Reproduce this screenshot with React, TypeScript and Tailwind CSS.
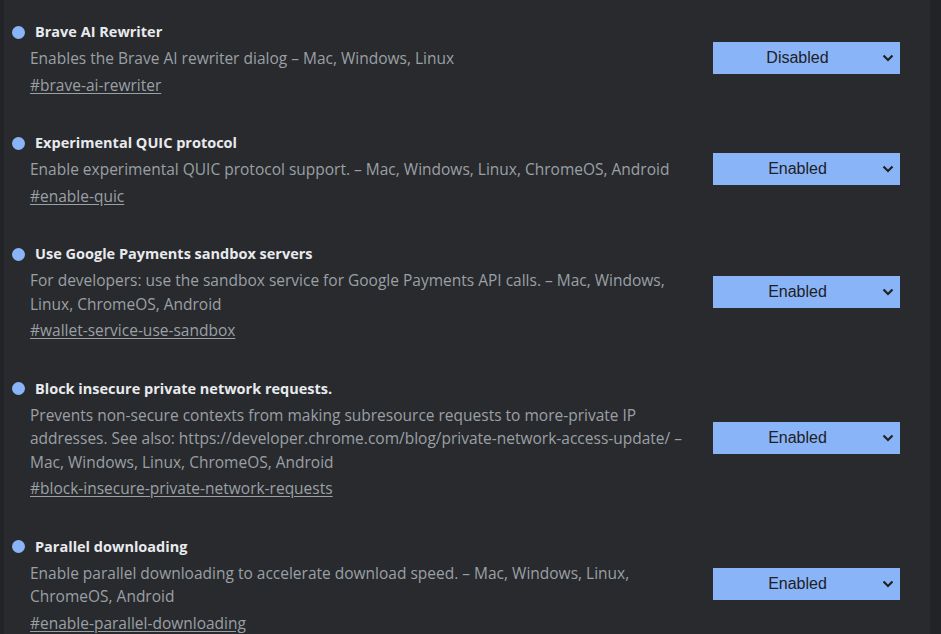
import React from 'react';

type Flag = {
  title: string;
  lines: string[];
  tag: string;
  value: string;
};

const flags: Flag[] = [
  {
    title: 'Brave AI Rewriter',
    lines: ['Enables the Brave AI rewriter dialog – Mac, Windows, Linux'],
    tag: '#brave-ai-rewriter',
    value: 'Disabled',
  },
  {
    title: 'Experimental QUIC protocol',
    lines: ['Enable experimental QUIC protocol support. – Mac, Windows, Linux, ChromeOS, Android'],
    tag: '#enable-quic',
    value: 'Enabled',
  },
  {
    title: 'Use Google Payments sandbox servers',
    lines: [
      'For developers: use the sandbox service for Google Payments API calls. – Mac, Windows,',
      'Linux, ChromeOS, Android',
    ],
    tag: '#wallet-service-use-sandbox',
    value: 'Enabled',
  },
  {
    title: 'Block insecure private network requests.',
    lines: [
      'Prevents non-secure contexts from making subresource requests to more-private IP',
      'addresses. See also: https://developer.chrome.com/blog/private-network-access-update/ –',
      'Mac, Windows, Linux, ChromeOS, Android',
    ],
    tag: '#block-insecure-private-network-requests',
    value: 'Enabled',
  },
  {
    title: 'Parallel downloading',
    lines: [
      'Enable parallel downloading to accelerate download speed. – Mac, Windows, Linux,',
      'ChromeOS, Android',
    ],
    tag: '#enable-parallel-downloading',
    value: 'Enabled',
  },
];

const Chevron = () => (
  <svg width="12" height="8" viewBox="0 0 12 8" className="shrink-0">
    <polyline points="1.5,1.5 6,6 10.5,1.5" fill="none" stroke="#202124" strokeWidth="2.2" />
  </svg>
);

const FlagRow: React.FC<{ flag: Flag }> = ({ flag }) => (
  <div className="pt-[19px] pb-[14.5px]">
    <div className="flex items-center">
      <div className="flex-1 min-w-0">
        <div className="flex items-center h-[26px]">
          <span className="ml-[8px] w-[13px] h-[13px] rounded-full bg-[#8ab4f8] shrink-0" />
          <h2 className="ml-[10px] text-[14.5px] font-bold text-[#e8eaed] leading-[26px]">{flag.title}</h2>
        </div>
        <p className="mt-[2px] pl-[26px] text-[15.5px] leading-[23.5px] text-[#9aa0a6] whitespace-nowrap">
          {flag.lines.map((l, i) => (
            <span key={i} className="block">
              {l}
            </span>
          ))}
        </p>
        <a className="block mt-[3px] ml-[26px] text-[15.5px] leading-[23px] text-[#9aa0a6] underline underline-offset-2 w-fit">
          {flag.tag}
        </a>
      </div>
      <button className="mr-[30px] w-[187px] h-[32px] bg-[#8ab4f8] flex items-center pr-[6px] shrink-0">
        <span className="flex-1 text-center text-[16px] text-[#202124] font-['Liberation_Sans',Arial,sans-serif]">
          {flag.value}
        </span>
        <Chevron />
      </button>
    </div>
  </div>
);

export default function App() {
  return (
    <div className="flex h-[634px] w-full overflow-hidden bg-[#292a2d] font-['Open_Sans','Noto_Sans',sans-serif]">
      <div className="w-[4px] shrink-0 bg-[#222326]" />
      <div className="flex-1 min-w-0">
        {flags.map((f) => (
          <FlagRow key={f.tag} flag={f} />
        ))}
      </div>
      <div className="w-[11px] shrink-0 bg-[#222326]" />
    </div>
  );
}
